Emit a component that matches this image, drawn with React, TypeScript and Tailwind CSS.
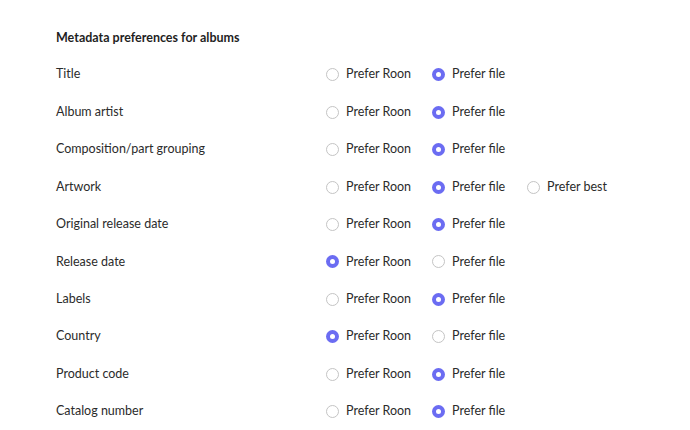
const rows: { label: string; choice: "roon" | "file"; best?: boolean }[] = [
  { label: "Title", choice: "file" },
  { label: "Album artist", choice: "file" },
  { label: "Composition/part grouping", choice: "file" },
  { label: "Artwork", choice: "file", best: true },
  { label: "Original release date", choice: "file" },
  { label: "Release date", choice: "roon" },
  { label: "Labels", choice: "file" },
  { label: "Country", choice: "roon" },
  { label: "Product code", choice: "file" },
  { label: "Catalog number", choice: "file" },
];

function Radio({ checked, label, width }: { checked: boolean; label: string; width: string }) {
  return (
    <label className={`flex items-center gap-[7px] ${width}`}>
      {checked ? (
        <span className="flex h-[13px] w-[13px] items-center justify-center rounded-full bg-[#6b6cf2]">
          <span className="h-[5px] w-[5px] rounded-full bg-white" />
        </span>
      ) : (
        <span className="h-[13px] w-[13px] rounded-full border-[1.5px] border-[#c4c4c4] bg-white" />
      )}
      <span>{label}</span>
    </label>
  );
}

function App() {
  return (
    <div className="h-[430px] w-[690px] bg-white pl-[56px] pt-[29px] text-[12.5px] text-[#2b2b2b] font-['Lato','Liberation_Sans',sans-serif]">
      <h2 className="h-[18px] text-[12.5px] font-bold leading-[18px] text-[#1f1f1f]">
        Metadata preferences for albums
      </h2>
      <div className="mt-[9px]">
        {rows.map((row) => (
          <div key={row.label} className="flex h-[37.45px] items-center">
            <span className="w-[270px]">{row.label}</span>
            <Radio checked={row.choice === "roon"} label="Prefer Roon" width="w-[106px]" />
            <Radio checked={row.choice === "file"} label="Prefer file" width="w-[95px]" />
            {row.best && <Radio checked={false} label="Prefer best" width="w-[100px]" />}
          </div>
        ))}
      </div>
    </div>
  );
}

export default App;
